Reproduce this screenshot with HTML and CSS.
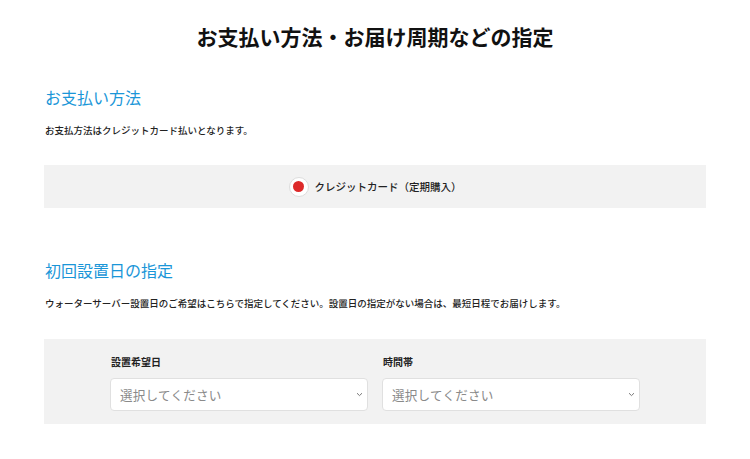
FILE: index.html
```html
<!DOCTYPE html>
<html lang="ja">
<head>
<meta charset="utf-8">
<title>お支払い方法・お届け周期などの指定</title>
<link rel="stylesheet" href="styles.css">
</head>
<body>
<main class="page">
  <h1 class="page-title">お支払い方法・お届け周期などの指定</h1>

  <section class="section">
    <h2 class="section-title">お支払い方法</h2>
    <p class="note">お支払方法はクレジットカード払いとなります。</p>
    <div class="panel panel-pay">
      <label class="radio">
        <span class="radio-mark"><span class="radio-dot"></span></span>
        <span class="radio-text">クレジットカード（定期購入）</span>
      </label>
    </div>
  </section>

  <section class="section section-second">
    <h2 class="section-title">初回設置日の指定</h2>
    <p class="note">ウォーターサーバー設置日のご希望はこちらで指定してください。設置日の指定がない場合は、最短日程でお届けします。</p>
    <div class="panel panel-date">
      <div class="fields">
        <div class="field">
          <div class="field-label">設置希望日</div>
          <div class="select">
            <span class="select-text">選択してください</span>
            <svg class="chev" width="7" height="5" viewBox="0 0 7 5"><path d="M1 1.2 L3.5 3.6 L6 1.2" fill="none" stroke="#777" stroke-width="1"/></svg>
          </div>
        </div>
        <div class="field">
          <div class="field-label">時間帯</div>
          <div class="select">
            <span class="select-text">選択してください</span>
            <svg class="chev" width="7" height="5" viewBox="0 0 7 5"><path d="M1 1.2 L3.5 3.6 L6 1.2" fill="none" stroke="#777" stroke-width="1"/></svg>
          </div>
        </div>
      </div>
    </div>
  </section>
</main>
</body>
</html>
```

FILE: styles.css
```css
* { box-sizing: border-box; }
html, body { margin: 0; padding: 0; background: #fff; }
body {
  font-family: "Noto Sans CJK JP", "Noto Sans", sans-serif;
  color: #222;
}
.page {
  padding: 0 44px;
}
.page-title {
  margin: 0;
  padding-top: 21px;
  font-size: 21px;
  line-height: 30px;
  font-weight: 700;
  text-align: center;
  color: #111;
}
.section-title {
  margin: 34px 0 0;
  font-size: 16px;
  line-height: 24px;
  font-weight: 400;
  color: #1a96d8;
  padding-left: 1px;
}
.section-second .section-title { margin-top: 50px; }
.note {
  margin: 14px 0 0;
  font-size: 9.5px;
  line-height: 14px;
  font-weight: 500;
  color: #222;
  padding-left: 1px;
}
.panel {
  background: #f2f2f2;
}
.panel-pay {
  margin-top: 28px;
  height: 43px;
  display: flex;
  justify-content: center;
  align-items: center;
}
.radio {
  display: flex;
  align-items: center;
  gap: 6px;
}
.radio-mark {
  width: 20px;
  height: 20px;
  border-radius: 50%;
  background: #fff;
  border: 1px solid #ddd;
  display: flex;
  align-items: center;
  justify-content: center;
}
.radio-dot {
  width: 11px;
  height: 11px;
  border-radius: 50%;
  background: #dd2a2a;
}
.radio-text {
  font-size: 10.5px;
  line-height: 14px;
  font-weight: 500;
  color: #222;
}
.panel-date {
  margin-top: 29px;
  padding: 16px 0 13px;
}
.fields {
  display: flex;
  justify-content: center;
  gap: 14px;
}
.field {
  width: 258px;
}
.field-label {
  font-size: 10px;
  line-height: 14px;
  font-weight: 700;
  color: #222;
  padding-left: 1px;
}
.select {
  margin-top: 9px;
  height: 33px;
  background: #fff;
  border: 1px solid #e0e0e0;
  border-radius: 4px;
  display: flex;
  align-items: center;
  justify-content: space-between;
  padding: 0 4px 0 9px;
}
.select-text {
  font-size: 12.6px;
  color: #8a8a8a;
  letter-spacing: 0.2px;
}
.chev { display: block; }
```
